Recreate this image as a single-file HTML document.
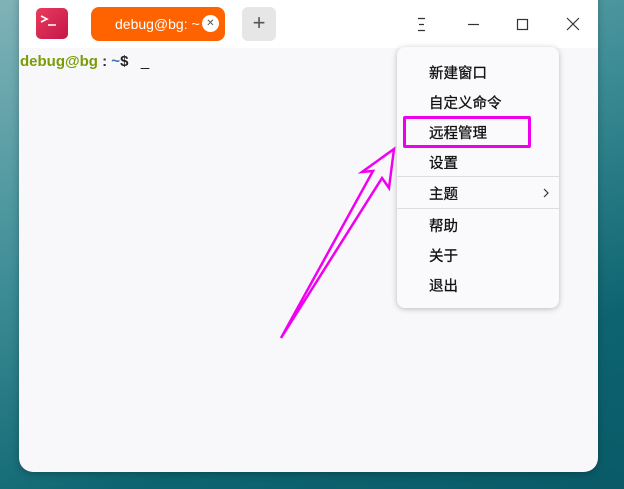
<!DOCTYPE html>
<html><head><meta charset="utf-8"><style>
*{margin:0;padding:0;box-sizing:border-box}
body{width:624px;height:489px;overflow:hidden;position:relative;font-family:"Liberation Sans","Noto Sans CJK SC",sans-serif;
background:linear-gradient(160deg,#7fb3b8 0%,#3d8d96 40%,#0d6470 75%,#0a5a68 100%);}
.win{position:absolute;left:19px;top:-14px;width:579px;height:486px;border-radius:14px;background:#f8f8fa;overflow:hidden;box-shadow:0 2px 8px rgba(0,0,0,.25)}
.tb{position:absolute;left:0;top:0;width:100%;height:62px;background:#fff}
.icon{position:absolute;left:17px;top:22px;width:32px;height:31px;border-radius:5px;background:linear-gradient(135deg,#e83c5c,#c3164a)}
.tab{position:absolute;left:72px;top:21px;width:134px;height:34px;border-radius:8px;background:#ff6300;color:#fff;font-size:14px;line-height:34px;padding-left:24px}
.tab .x{position:absolute;left:111px;top:8px;width:17px;height:17px;border-radius:50%;background:#fff;color:#555;font-size:10px;line-height:17px;text-align:center;padding:0}
.plus{position:absolute;left:223px;top:21px;width:34px;height:34px;border-radius:6px;background:#e6e6e6;color:#555;font-size:22px;line-height:32px;text-align:center}
.prompt{position:absolute;left:1px;top:67px;font-size:15px;font-weight:bold;white-space:pre}
.menu{position:absolute;left:397px;top:47px;width:162px;height:261px;border-radius:8px;background:#faf9fb;box-shadow:0 1px 6px rgba(0,0,0,.25);font-size:14.5px;color:#111;-webkit-text-stroke:0.3px #111}
.menu div{position:absolute;left:32px}
.sep{position:absolute;left:0;width:162px;height:1px;background:#ddd}
</style></head><body>
<div class="win">
<div class="tb">
<div class="icon"><svg width="32" height="31" stroke="#fff" stroke-width="1.6" fill="none"><path d="M5 8l6 3-6 3M12 17h8"/></svg></div>
<div class="tab">debug@bg: ~<span class="x">✕</span></div>
<div class="plus">+</div>
<svg style="position:absolute;left:390px;top:28px" width="180" height="20" stroke="#333" stroke-width="1.2" fill="none">
<path d="M9 4.5h7M10 10.5h5M9 16.5h7"/>
<path d="M59 10.5h11"/>
<rect x="108.5" y="5.5" width="10" height="10"/>
<path d="M158 4l12 12M170 4l-12 12"/>
</svg>
</div>
<div class="prompt"><span style="color:#7a9c06">debug@bg</span><span style="color:#333"> : </span><span style="color:#3c6fb4">~</span><span style="color:#222">$   </span><span style="color:#111;font-weight:normal">_</span></div>
</div>
<div class="menu">
<div style="top:15px">新建窗口</div>
<div style="top:45px">自定义命令</div>
<div style="top:75px">远程管理</div>
<div style="top:105px">设置</div>
<span class="sep" style="top:129px"></span>
<div style="top:136px">主题</div>
<svg style="position:absolute;left:145px;top:140px" width="8" height="12" stroke="#333" stroke-width="1.2" fill="none"><path d="M2 2l4 4-4 4"/></svg>
<span class="sep" style="top:161px"></span>
<div style="top:168px">帮助</div>
<div style="top:198px">关于</div>
<div style="top:228px">退出</div>
</div>
<div style="position:absolute;left:403px;top:116px;width:128px;height:32px;border:3px solid #ee00ee;border-radius:2px"></div>
<svg style="position:absolute;left:0;top:0" width="624" height="489"><polygon points="394,149 362,172 373,171 281,338 382,178 389,188" fill="none" stroke="#f000f0" stroke-width="2.5" stroke-linejoin="miter"/></svg>
</body></html>
